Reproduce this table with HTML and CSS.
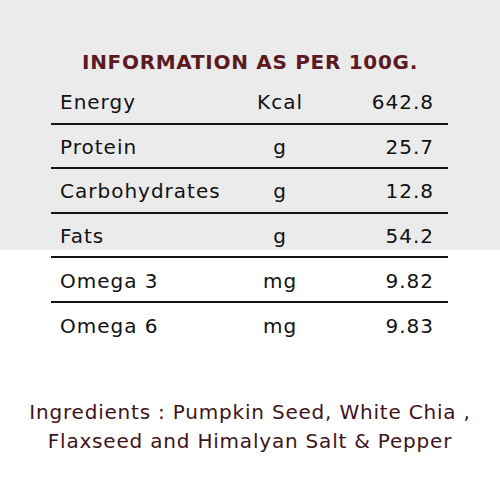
FILE: index.html
```html
<!DOCTYPE html>
<html lang="en">

<head>
  <meta charset="UTF-8">
  <meta name="viewport" content="width=device-width, initial-scale=1.0">
  <title>Nutrition Information</title>
  <link rel="stylesheet" href="styles.css">
</head>

<body>
  <div class="sheet">
    <h2 class="title">INFORMATION AS PER 100G.</h2>
    <table class="facts">
      <tr>
        <td class="name">Energy</td>
        <td class="unit">Kcal</td>
        <td class="value">642.8</td>
      </tr>
      <tr>
        <td class="name">Protein</td>
        <td class="unit">g</td>
        <td class="value">25.7</td>
      </tr>
      <tr>
        <td class="name">Carbohydrates</td>
        <td class="unit">g</td>
        <td class="value">12.8</td>
      </tr>
      <tr>
        <td class="name">Fats</td>
        <td class="unit">g</td>
        <td class="value">54.2</td>
      </tr>
      <tr>
        <td class="name">Omega 3</td>
        <td class="unit">mg</td>
        <td class="value">9.82</td>
      </tr>
      <tr>
        <td class="name">Omega 6</td>
        <td class="unit">mg</td>
        <td class="value">9.83</td>
      </tr>
    </table>
    <p class="ingredients">Ingredients : Pumpkin Seed, White Chia ,<br>Flaxseed and Himalyan Salt &amp; Pepper</p>
  </div>
</body>

</html>
```

FILE: styles.css
```css
* {
  margin: 0;
  padding: 0;
}

body {
  background: linear-gradient(#ebebeb 0, #ebebeb 250px, #fff 250px);
  font-family: "DejaVu Sans", "Open Sans", sans-serif;
  color: #111;
}

.sheet {
  width: 500px;
  height: 500px;
}

/* 标题 */
.title {
  padding-top: 45px;
  line-height: 34px;
  font-size: 20px;
  font-weight: bold;
  letter-spacing: 0.7px;
  text-align: center;
  color: #5b1a21;
}

/* 营养表 */
.facts {
  width: 397px;
  margin-left: 51px;
  border-collapse: collapse;
  font-size: 20px;
  letter-spacing: 1px;
}

.facts tr {
  height: 44.6px;
  border-bottom: 2px solid #151515;
}

.facts tr:last-child {
  border-bottom: none;
}

.facts td {
  padding: 0;
  padding-top: 2px;
  vertical-align: middle;
}

.facts .name {
  width: 170px;
  padding-left: 9px;
}

.facts .unit {
  width: 100px;
  text-align: center;
}

.facts .value {
  padding-right: 14px;
  text-align: right;
}

/* 配料 */
.ingredients {
  margin-top: 51px;
  line-height: 29px;
  font-size: 20px;
  letter-spacing: 0.8px;
  text-align: center;
  color: #3f1419;
}
```
